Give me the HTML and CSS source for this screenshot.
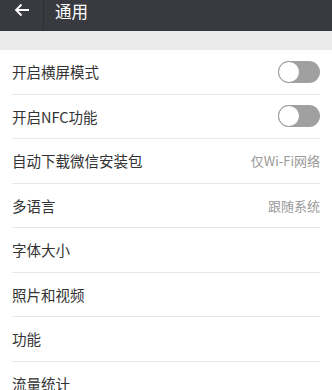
FILE: index.html
```html
<!DOCTYPE html>
<html>
<head>
<meta charset="utf-8">
<link rel="stylesheet" href="styles.css">
</head>
<body>
<div class="header">
  <div class="back">
    <svg width="16" height="14" viewBox="0 0 16 14"><path d="M15 7H2M7.5 1.5L2 7l5.5 5.5" fill="none" stroke="#fff" stroke-width="1.8"/></svg>
  </div>
  <div class="divider"></div>
  <div class="title">通用</div>
</div>
<div class="gap"></div>
<div class="list">
  <div class="row"><span class="label">开启横屏模式</span><span class="toggle"><span class="knob"></span></span></div>
  <div class="row"><span class="label">开启NFC功能</span><span class="toggle"><span class="knob"></span></span></div>
  <div class="row"><span class="label">自动下载微信安装包</span><span class="value">仅Wi-Fi网络</span></div>
  <div class="row"><span class="label">多语言</span><span class="value">跟随系统</span></div>
  <div class="row"><span class="label">字体大小</span></div>
  <div class="row"><span class="label">照片和视频</span></div>
  <div class="row"><span class="label">功能</span></div>
  <div class="row"><span class="label">流量统计</span></div>
</div>
</body>
</html>
```
FILE: styles.css
```css
html, body {
  margin: 0;
  padding: 0;
  background: #fff;
  font-family: "Noto Sans CJK SC", "Liberation Sans", sans-serif;
  overflow: hidden;
}
.header {
  height: 31px;
  background: #393a3f;
  display: flex;
  align-items: flex-start;
}
.back {
  width: 43px;
  height: 20px;
  display: flex;
  align-items: center;
  justify-content: center;
}
.divider {
  width: 1px;
  height: 31px;
  background: #2f3034;
}
.title {
  color: #fff;
  font-size: 16.5px;
  line-height: 20px;
  margin-left: 11px;
  margin-top: 1px;
}
.gap {
  height: 19px;
  background: #ebebeb;
}
.list {
  display: flex;
  flex-direction: column;
}
.row {
  height: 44.5px;
  margin-left: 12px;
  margin-right: 12px;
  border-bottom: 1px solid #e8e8e8;
  display: flex;
  align-items: center;
  justify-content: space-between;
  box-sizing: border-box;
}
.label {
  font-size: 14.5px;
  color: #333;
}
.value {
  font-size: 13px;
  color: #9a9a9a;
}
.toggle {
  width: 42px;
  height: 22px;
  border-radius: 11px;
  background: #a0a0a0;
  position: relative;
  flex: none;
}
.knob {
  position: absolute;
  left: 0;
  top: 0;
  width: 20px;
  height: 20px;
  border-radius: 50%;
  background: #fff;
  border: 1px solid #9a9a9a;
}
```
